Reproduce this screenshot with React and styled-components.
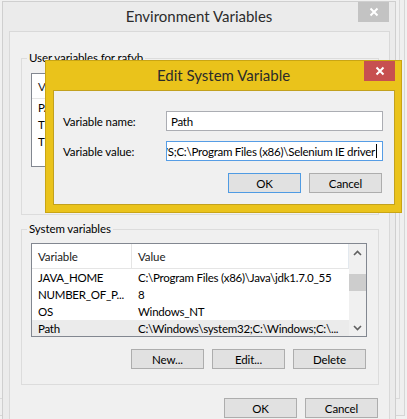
import React from "react";
import styled, { createGlobalStyle } from "styled-components";

const GlobalStyle = createGlobalStyle`
  html, body { margin: 0; padding: 0; background: #f1f1f1; }
  body {
    font-family: Lato, "Open Sans", "Liberation Sans", sans-serif;
    font-size: 11.5px;
    letter-spacing: -0.1px;
    color: #000;
  }
  * { box-sizing: border-box; }
`;

const Desktop = styled.div`
  position: relative;
  width: 407px;
  height: 419px;
  overflow: hidden;
  background: #f1f1f1;
`;

const BackWindow = styled.div`
  position: absolute;
  left: -30px;
  top: -30px;
  width: 435px;
  height: 446px;
  border: 1px solid #d6d6d6;
  background: #efefef;
  display: flex;
  padding: 0 4px 16px 0;
`;

const BackPanel = styled.div`
  flex: 1;
  border: 1px solid #dadada;
  background: #f0f0f0;
`;

const Window = styled.div`
  position: absolute;
  left: ${(p) => p.$left}px;
  top: ${(p) => p.$top}px;
  width: ${(p) => p.$width}px;
  height: ${(p) => p.$height}px;
  background: ${(p) => p.$frame};
  border: 1px solid ${(p) => p.$edge};
  display: flex;
  flex-direction: column;
`;

const TitleBar = styled.div`
  height: 29px;
  display: grid;
  grid-template-columns: 1fr auto 1fr;
  align-items: center;
  flex-shrink: 0;
`;

const Title = styled.div`
  grid-column: 2;
  font-size: 15px;
  letter-spacing: 0;
  color: #2b2b2b;
  padding-bottom: 1px;
  white-space: nowrap;
`;

const CloseButton = styled.div`
  grid-column: 3;
  justify-self: end;
  align-self: start;
  width: 31px;
  height: 20px;
  margin-right: 6px;
  background: ${(p) => p.$bg};
  display: flex;
  align-items: center;
  justify-content: center;
`;

const Client = styled.div`
  background: #f0f0f0;
  border: 1px solid ${(p) => p.$edge};
  margin: ${(p) => p.$margin};
  padding: ${(p) => p.$padding};
  display: flex;
  flex-direction: column;
  flex: ${(p) => (p.$grow ? 1 : "none")};
`;

const Group = styled.fieldset`
  margin: ${(p) => p.$mt || 0}px 0 0 0;
  padding: 0 11px 15px 9px;
  border: 1px solid #dcdcdc;
  min-width: 0;
  display: flex;
  flex-direction: column;
`;

const Legend = styled.legend`
  padding: 0 2px;
  margin-left: -4px;
  line-height: 16px;
  font-size: 11.5px;
  color: #000;
`;

const ListBox = styled.div`
  margin-top: ${(p) => p.$mt}px;
  height: 94px;
  border: 1px solid #828790;
  background: #fff;
  display: flex;
  overflow: hidden;
`;

const ListContent = styled.div`
  flex: 1;
  min-width: 0;
  display: flex;
  flex-direction: column;
`;

const HeaderRow = styled.div`
  height: 25px;
  display: grid;
  grid-template-columns: 100px 1fr;
  border-bottom: 1px solid #e5e5e5;
  border-right: 1px solid #e3e9ef;
  flex-shrink: 0;
`;

const HeaderCell = styled.div`
  display: flex;
  align-items: center;
  padding-left: 6px;
  color: #1a1a1a;
  border-right: ${(p) => (p.$divider ? "1px solid #e5e5e5" : "none")};
`;

const Row = styled.div`
  height: 17px;
  display: grid;
  grid-template-columns: 100px 1fr;
  align-items: center;
  background: ${(p) => (p.$selected ? "#ebebeb" : "transparent")};
  flex-shrink: 0;
`;

const Cell = styled.div`
  padding-left: 6px;
  white-space: nowrap;
  overflow: hidden;
  letter-spacing: -0.25px;
`;

const Scrollbar = styled.div`
  width: 17px;
  background: #f0f0f0;
  display: flex;
  flex-direction: column;
  flex-shrink: 0;
`;

const ArrowBox = styled.div`
  height: 17px;
  display: flex;
  align-items: center;
  justify-content: center;
`;

const Track = styled.div`
  flex: 1;
`;

const Thumb = styled.div`
  margin-top: 13px;
  height: 17px;
  background: #cdcdcd;
`;

const ButtonRow = styled.div`
  display: flex;
  justify-content: flex-end;
  gap: ${(p) => p.$gap}px;
  margin-top: ${(p) => p.$mt}px;
  padding-right: ${(p) => p.$pr || 0}px;
`;

const Button = styled.div`
  width: 73px;
  height: 20px;
  background: #e1e1e1;
  border: 1px solid ${(p) => (p.$default ? "#4f9be3" : "#adadad")};
  display: flex;
  align-items: center;
  justify-content: center;
  color: #000;
`;

const FieldGrid = styled.div`
  display: grid;
  grid-template-columns: 103px 217px;
  row-gap: 10px;
  align-items: center;
`;

const FieldLabel = styled.div`
  white-space: nowrap;
`;

const TextBox = styled.div`
  height: 20px;
  background: #fff;
  border: 1px solid ${(p) => (p.$focused ? "#569de5" : "#abadb3")};
  display: flex;
  align-items: center;
  justify-content: ${(p) => (p.$end ? "flex-end" : "flex-start")};
  padding: ${(p) => (p.$end ? "0 5px 0 0" : "0 0 0 4px")};
  overflow: hidden;
  white-space: nowrap;
`;

const BoxText = styled.span`
  flex-shrink: 0;
  letter-spacing: -0.25px;
`;

const Caret = styled.span`
  flex-shrink: 0;
  width: 1px;
  height: 14px;
  background: #000;
  margin-left: 1px;
`;

const CloseGlyph = () => (
  <svg width="10" height="10" viewBox="0 0 10 10">
    <path d="M1.5 1.5 L8.5 8.5 M8.5 1.5 L1.5 8.5" stroke="#fff" strokeWidth="2" fill="none" />
  </svg>
);

const Chevron = ({ down }) => (
  <svg width="9" height="6" viewBox="0 0 9 6">
    <polyline
      points={down ? "1,1 4.5,4.5 8,1" : "1,5 4.5,1.5 8,5"}
      stroke="#606060"
      strokeWidth="1.6"
      fill="none"
    />
  </svg>
);

const userVars = [
  ["PATH", "C:\\Users\\rafyb\\AppData\\Roaming\\npm"],
  ["TEMP", "%USERPROFILE%\\AppData\\Local\\Temp"],
  ["TMP", "%USERPROFILE%\\AppData\\Local\\Temp"],
];

const systemVars = [
  ["JAVA_HOME", "C:\\Program Files (x86)\\Java\\jdk1.7.0_55"],
  ["NUMBER_OF_P...", "8"],
  ["OS", "Windows_NT"],
  ["Path", "C:\\Windows\\system32;C:\\Windows;C:\\...", true],
];

const VarList = ({ rows, mt }) => (
  <ListBox $mt={mt}>
    <ListContent>
      <HeaderRow>
        <HeaderCell $divider>Variable</HeaderCell>
        <HeaderCell>Value</HeaderCell>
      </HeaderRow>
      {rows.map(([k, v, sel]) => (
        <Row key={k} $selected={sel}>
          <Cell>{k}</Cell>
          <Cell>{v}</Cell>
        </Row>
      ))}
    </ListContent>
    <Scrollbar>
      <ArrowBox>
        <Chevron />
      </ArrowBox>
      <Track>
        <Thumb />
      </Track>
      <ArrowBox>
        <Chevron down />
      </ArrowBox>
    </Scrollbar>
  </ListBox>
);

export default function App() {
  return (
    <Desktop>
      <GlobalStyle />
      <BackWindow>
        <BackPanel />
      </BackWindow>

      <Window $left={2} $top={1} $width={394} $height={450} $frame="#ebebeb" $edge="#cfcfcf">
        <TitleBar>
          <Title>Environment Variables</Title>
          <CloseButton $bg="#c3c3c3">
            <CloseGlyph />
          </CloseButton>
        </TitleBar>
        <Client $edge="#d9d9d9" $margin="0 5px 0 6px" $padding="18px 10px 0 11px" $grow>
          <Group>
            <Legend>User variables for rafyb</Legend>
            <VarList rows={userVars} mt={7} />
            <ButtonRow $gap={8} $mt={12} $pr={1}>
              <Button>New...</Button>
              <Button>Edit...</Button>
              <Button>Delete</Button>
            </ButtonRow>
          </Group>
          <Group $mt={6}>
            <Legend>System variables</Legend>
            <VarList rows={systemVars} mt={6} />
            <ButtonRow $gap={8} $mt={12} $pr={1}>
              <Button>New...</Button>
              <Button>Edit...</Button>
              <Button>Delete</Button>
            </ButtonRow>
          </Group>
          <ButtonRow $gap={8} $mt={13} $pr={1}>
            <Button>OK</Button>
            <Button>Cancel</Button>
          </ButtonRow>
        </Client>
      </Window>

      <Window $left={45} $top={60} $width={357} $height={153} $frame="#eac31b" $edge="#c9a514">
        <TitleBar>
          <Title>Edit System Variable</Title>
          <CloseButton $bg="#c75050">
            <CloseGlyph />
          </CloseButton>
        </TitleBar>
        <Client $edge="#c2a11e" $margin="0 6px 7px 7px" $padding="20px 11px 11px 9px">
          <FieldGrid>
            <FieldLabel>Variable name:</FieldLabel>
            <TextBox>
              <BoxText>Path</BoxText>
            </TextBox>
            <FieldLabel>Variable value:</FieldLabel>
            <TextBox $focused $end>
              <BoxText>WS;C:\Program Files (x86)\Selenium IE driver</BoxText>
              <Caret />
            </TextBox>
          </FieldGrid>
          <ButtonRow $gap={8} $mt={12} $pr={1}>
            <Button $default>OK</Button>
            <Button>Cancel</Button>
          </ButtonRow>
        </Client>
      </Window>
    </Desktop>
  );
}
